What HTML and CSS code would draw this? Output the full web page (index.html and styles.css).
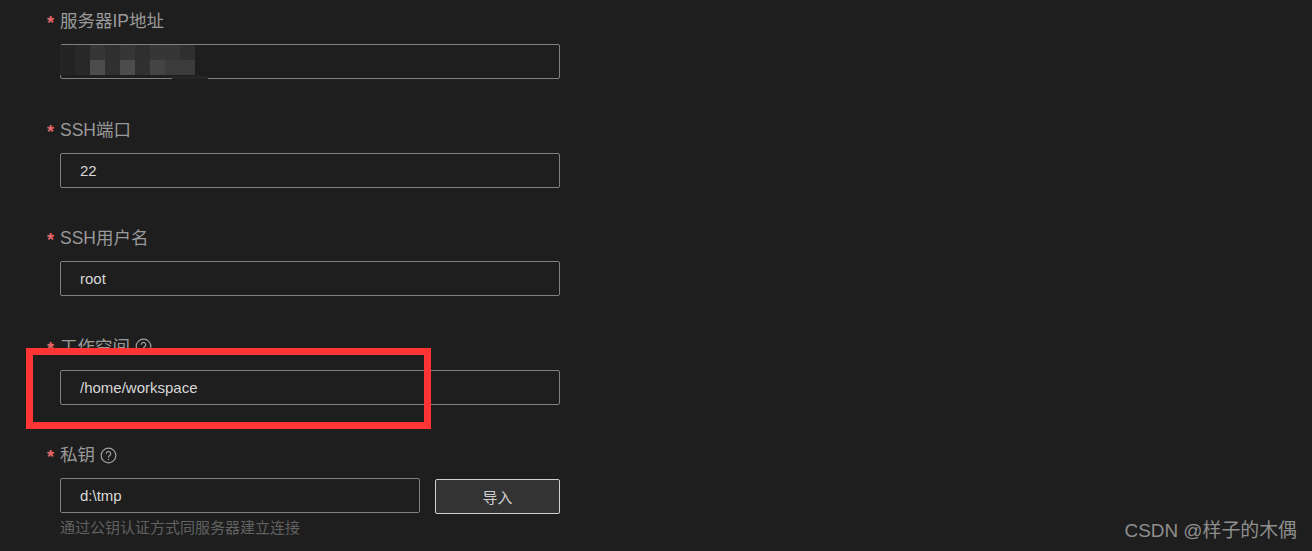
FILE: index.html
```html
<!DOCTYPE html>
<html lang="zh-CN">
<head>
<meta charset="utf-8">
<title>服务器配置</title>
<link rel="stylesheet" href="styles.css">
</head>
<body>
<form class="form">
  <div class="field">
    <div class="label"><span class="req">*</span>服务器IP地址</div>
    <div class="masked">
      <div class="input"></div>
      <div class="mosaic" aria-hidden="true">
        <i class="m1"></i><i class="m2"></i><i class="m3"></i><i class="m4"></i><i class="m3"></i><i class="m4"></i><i class="m3"></i><i class="m3"></i><i class="m4"></i>
        <i class="m1"></i><i class="m2"></i><i class="m5"></i><i class="m6"></i><i class="m5"></i><i class="m6"></i><i class="m7"></i><i class="m8"></i><i class="m8"></i>
      </div>
      <div class="smudge" aria-hidden="true"></div>
    </div>
  </div>
  <div class="field">
    <div class="label"><span class="req">*</span>SSH端口</div>
    <div class="input">22</div>
  </div>
  <div class="field">
    <div class="label"><span class="req">*</span>SSH用户名</div>
    <div class="input">root</div>
  </div>
  <div class="field">
    <div class="label"><span class="req">*</span>工作空间
      <svg class="help" viewBox="0 0 16 16" aria-hidden="true"><circle cx="8" cy="8" r="6.9"/><path d="M5.9 6.3a2.1 2.1 0 1 1 3.3 1.7c-.8.5-1.2 1-1.2 1.9"/><path d="M8 11.2v1.2"/></svg>
    </div>
    <div class="input">/home/workspace</div>
  </div>
  <div class="field">
    <div class="label"><span class="req">*</span>私钥
      <svg class="help" viewBox="0 0 16 16" aria-hidden="true"><circle cx="8" cy="8" r="6.9"/><path d="M5.9 6.3a2.1 2.1 0 1 1 3.3 1.7c-.8.5-1.2 1-1.2 1.9"/><path d="M8 11.2v1.2"/></svg>
    </div>
    <div class="key-row">
      <div class="input key">d:\tmp</div>
      <button class="btn" type="button">导入</button>
    </div>
    <div class="hint">通过公钥认证方式同服务器建立连接</div>
  </div>
</form>
<div class="highlight" aria-hidden="true"></div>
<div class="watermark">CSDN @样子的木偶</div>
</body>
</html>
```
FILE: styles.css
```css
* { box-sizing: border-box; }
html, body { margin: 0; height: 551px; overflow: hidden; }
body {
  position: relative;
  background: #1e1e1e;
  font-family: "Liberation Sans", "Noto Sans CJK SC", sans-serif;
}
.form { width: 560px; padding: 9px 0 0 60px; }
.field { margin-bottom: 38.5px; }
.field:last-child { margin-bottom: 0; }
.label {
  position: relative;
  display: flex;
  align-items: center;
  height: 24px;
  margin-bottom: 11px;
  font-size: 17.5px;
  line-height: 24px;
  color: #9a9a9a;
}
.req {
  position: absolute;
  left: -13px;
  top: 2px;
  font-size: 18px;
  font-weight: 700;
  color: #e5686b;
}
.help {
  width: 17px;
  height: 17px;
  margin-left: 5px;
  fill: none;
  stroke: #a0a0a0;
  stroke-width: 1.1;
}
.input {
  height: 35px;
  padding-left: 19px;
  border: 1px solid #808080;
  border-radius: 2px;
  font-size: 15px;
  line-height: 33px;
  color: #d8d8d8;
}
.masked { position: relative; }
.mosaic {
  position: absolute;
  left: 0;
  top: 1px;
  display: grid;
  grid-template-columns: repeat(9, 15px);
  grid-template-rows: 15px 15px;
  filter: blur(0.4px);
}
.mosaic i { display: block; }
.m1 { background: #242424; }
.m2 { background: #282828; }
.m3 { background: #363636; }
.m4 { background: #2f2f2f; }
.m5 { background: #4c4c4c; }
.m6 { background: #303030; }
.m7 { background: #444444; }
.m8 { background: #3b3b3b; }
.smudge {
  position: absolute;
  left: 112px;
  top: 32px;
  width: 36px;
  height: 3px;
  background: #252525;
}
.key-row { display: flex; align-items: flex-start; gap: 15px; }
.key { width: 360px; }
.btn {
  width: 125px;
  height: 35px;
  margin-top: 1px;
  padding: 0;
  background: #333333;
  border: 1px solid #d0d0d0;
  border-radius: 2px;
  font: inherit;
  font-size: 15px;
  color: #cfcfcf;
}
.hint {
  margin-top: 3px;
  font-size: 15px;
  line-height: 22px;
  color: #616161;
}
.highlight {
  position: absolute;
  left: 26px;
  top: 348px;
  width: 405px;
  height: 81px;
  border: 7px solid #ff3535;
}
.watermark {
  position: absolute;
  right: 15px;
  top: 519px;
  font-size: 18.9px;
  line-height: 24px;
  color: #8f8f8f;
}
```
